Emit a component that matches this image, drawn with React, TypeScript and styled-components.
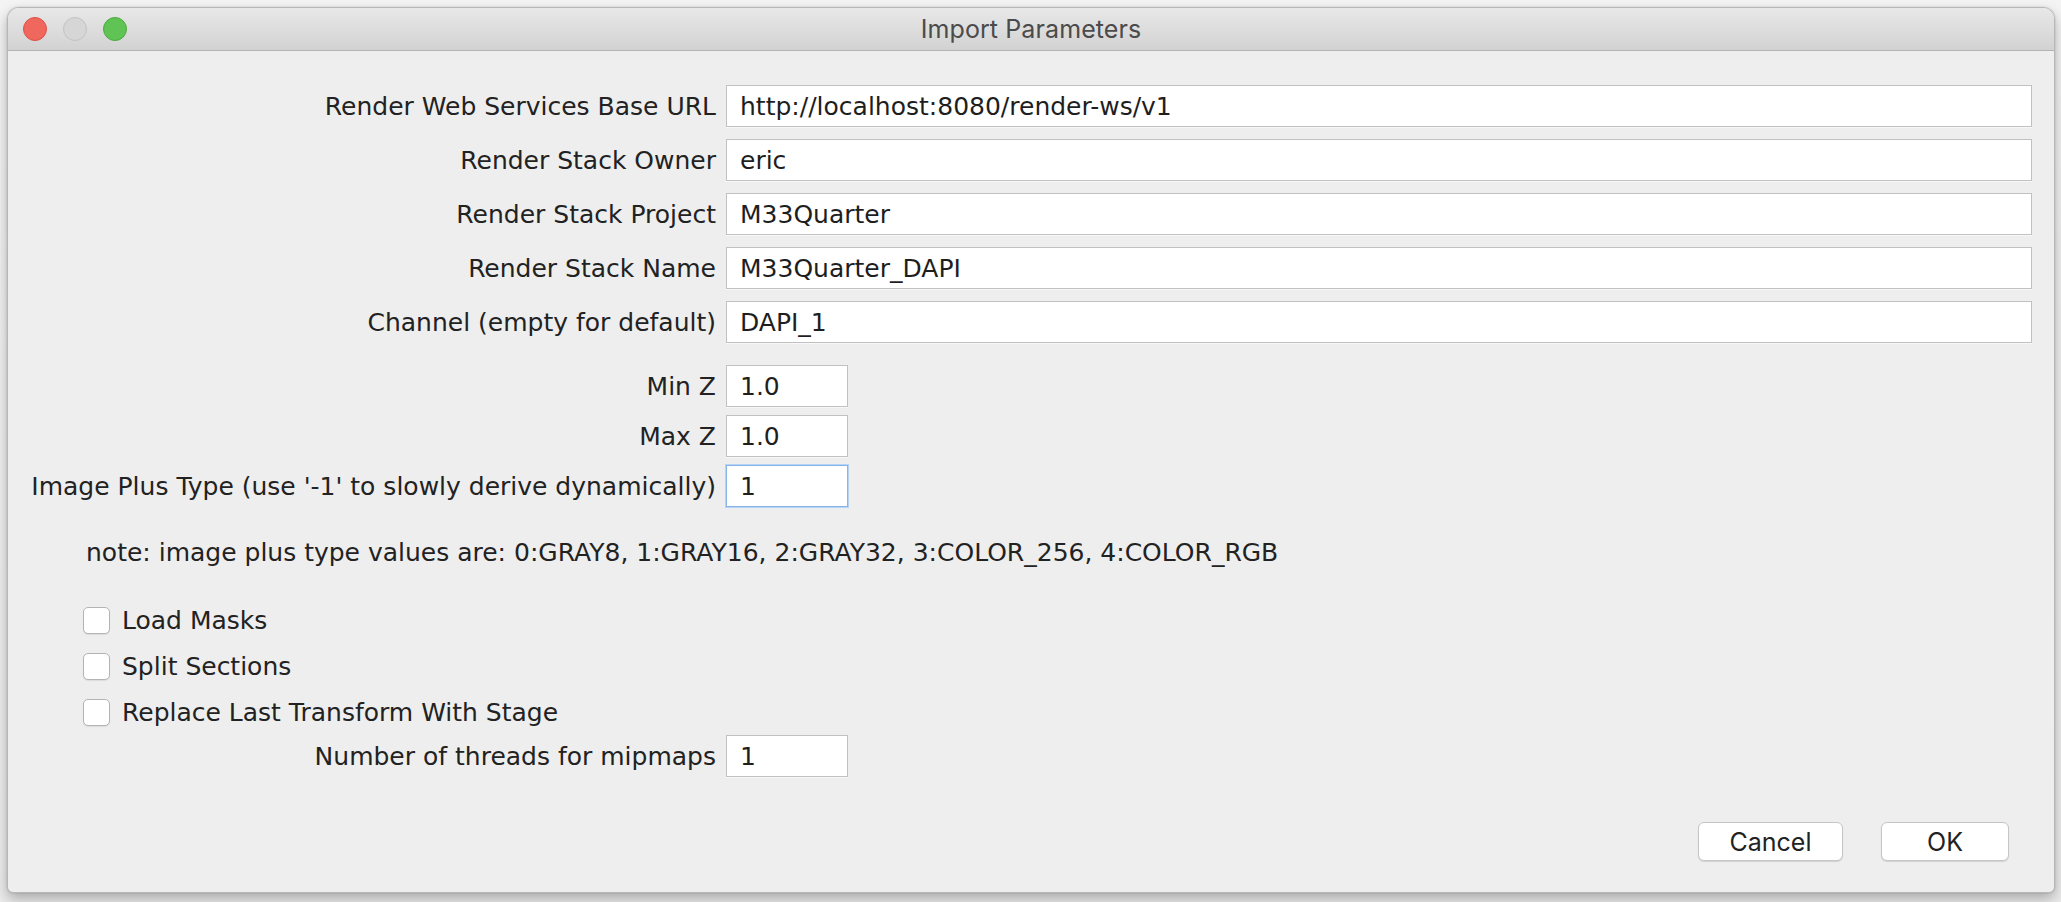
import React from "react";
import styled, { createGlobalStyle } from "styled-components";

const GlobalStyle = createGlobalStyle`
  html, body {
    margin: 0;
    padding: 0;
  }
  body {
    width: 2061px;
    height: 902px;
    overflow: hidden;
    background: #f0f0f0;
    font-family: "DejaVu Sans", "Liberation Sans", sans-serif;
    color: #222222;
  }
`;

const Page = styled.div`
  box-sizing: border-box;
  width: 2061px;
  height: 902px;
  padding: 7px 0 0 7px;
  background: linear-gradient(#f4f4f4, #ececec);
`;

const Window = styled.div`
  box-sizing: border-box;
  width: 2048px;
  height: 886px;
  display: flex;
  flex-direction: column;
  border: 1px solid #b7b7b7;
  border-radius: 12px 12px 6px 6px;
  background: #eeeeee;
  overflow: hidden;
  box-shadow: 0 6px 14px rgba(0, 0, 0, 0.28), 0 0 2px rgba(0, 0, 0, 0.18);
`;

const TitleBar = styled.div`
  box-sizing: border-box;
  height: 43px;
  flex: none;
  display: grid;
  grid-template-columns: 1fr auto 1fr;
  align-items: center;
  background: linear-gradient(#e9e8e9, #d2d2d2);
  border-bottom: 1px solid #b3b3b3;
`;

const Lights = styled.div`
  display: flex;
  gap: 16px;
  padding-left: 15px;
`;

const Light = styled.span<{ $fill: string; $edge: string }>`
  box-sizing: border-box;
  width: 24px;
  height: 24px;
  border-radius: 50%;
  background: ${(p) => p.$fill};
  border: 1px solid ${(p) => p.$edge};
`;

const Title = styled.div`
  font-family: "Inter", "Liberation Sans", sans-serif;
  font-size: 25px;
  color: #4b4b4b;
  letter-spacing: 0.1px;
`;

const Body = styled.div`
  flex: 1;
  display: flex;
  flex-direction: column;
  padding: 34px 22px 0 21px;
`;

const Row = styled.div<{ $top: number }>`
  display: flex;
  align-items: center;
  gap: 10px;
  margin-top: ${(p) => p.$top}px;
`;

const Label = styled.label`
  flex: none;
  width: 687px;
  text-align: right;
  white-space: nowrap;
  font-size: 25px;
  color: #222222;
`;

const Field = styled.input<{ $small?: boolean; $focused?: boolean }>`
  box-sizing: border-box;
  height: 42px;
  ${(p) => (p.$small ? "width: 122px; flex: none;" : "flex: 1; min-width: 0;")}
  margin: 0;
  padding: 0 0 0 13px;
  border: 1px solid ${(p) => (p.$focused ? "#86b5ea" : "#c1c1c1")};
  box-shadow: ${(p) => (p.$focused ? "0 0 0 1px #b7d3f3" : "0 1px 0 #f8f8f8")};
  background: #ffffff;
  font-family: "DejaVu Sans", sans-serif;
  font-size: 25px;
  color: #1e1e1e;
  outline: none;
`;

const Note = styled.div<{ $top: number }>`
  height: 42px;
  display: flex;
  align-items: center;
  margin-top: ${(p) => p.$top}px;
  padding-left: 57px;
  font-size: 25px;
  color: #222222;
  white-space: nowrap;
`;

const CheckRow = styled.div<{ $top: number }>`
  height: 46px;
  display: flex;
  align-items: center;
  gap: 12px;
  margin-top: ${(p) => p.$top}px;
  padding-left: 54px;
  font-size: 25px;
  color: #222222;
  white-space: nowrap;
`;

const Box = styled.span`
  box-sizing: border-box;
  width: 27px;
  height: 27px;
  flex: none;
  border: 1px solid #b4b4b4;
  border-radius: 5px;
  background: #ffffff;
  box-shadow: 0 1px 1px rgba(0, 0, 0, 0.08);
`;

const ButtonBar = styled.div`
  display: flex;
  justify-content: flex-end;
  gap: 38px;
  margin-top: 45px;
  padding-right: 23px;
`;

const Button = styled.button<{ $w: number }>`
  box-sizing: border-box;
  width: ${(p) => p.$w}px;
  height: 39px;
  margin: 0;
  padding: 0;
  border: 1px solid #c6c6c6;
  border-radius: 6px;
  background: #ffffff;
  box-shadow: 0 1px 1px rgba(0, 0, 0, 0.12);
  font-family: "Inter", "Liberation Sans", sans-serif;
  font-size: 25px;
  color: #222222;
`;

type TextRow = { label: string; value: string; top: number; small?: boolean; focused?: boolean };

const textRows: TextRow[] = [
  { label: "Render Web Services Base URL", value: "http://localhost:8080/render-ws/v1", top: 0 },
  { label: "Render Stack Owner", value: "eric", top: 12 },
  { label: "Render Stack Project", value: "M33Quarter", top: 12 },
  { label: "Render Stack Name", value: "M33Quarter_DAPI", top: 12 },
  { label: "Channel (empty for default)", value: "DAPI_1", top: 12 },
  { label: "Min Z", value: "1.0", top: 22, small: true },
  { label: "Max Z", value: "1.0", top: 8, small: true },
  {
    label: "Image Plus Type (use '-1' to slowly derive dynamically)",
    value: "1",
    top: 8,
    small: true,
    focused: true,
  },
];

const checks = [
  { label: "Load Masks", top: 23.5 },
  { label: "Split Sections", top: 0 },
  { label: "Replace Last Transform With Stage", top: 0 },
];

export default function App() {
  return (
    <>
      <GlobalStyle />
      <Page>
        <Window>
          <TitleBar>
            <Lights>
              <Light $fill="#f0675e" $edge="#dc5048" />
              <Light $fill="#d6d6d6" $edge="#c2c2c2" />
              <Light $fill="#5fc453" $edge="#4ea842" />
            </Lights>
            <Title>Import Parameters</Title>
            <span />
          </TitleBar>
          <Body>
            {textRows.map((r) => (
              <Row key={r.label} $top={r.top}>
                <Label>{r.label}</Label>
                <Field readOnly defaultValue={r.value} $small={r.small} $focused={r.focused} />
              </Row>
            ))}
            <Note $top={24.5}>
              note: image plus type values are: 0:GRAY8, 1:GRAY16, 2:GRAY32, 3:COLOR_256, 4:COLOR_RGB
            </Note>
            {checks.map((c) => (
              <CheckRow key={c.label} $top={c.top}>
                <Box role="checkbox" aria-checked="false" />
                {c.label}
              </CheckRow>
            ))}
            <Row $top={0}>
              <Label>Number of threads for mipmaps</Label>
              <Field readOnly defaultValue="1" $small />
            </Row>
            <ButtonBar>
              <Button $w={145}>Cancel</Button>
              <Button $w={128}>OK</Button>
            </ButtonBar>
          </Body>
        </Window>
      </Page>
    </>
  );
}
